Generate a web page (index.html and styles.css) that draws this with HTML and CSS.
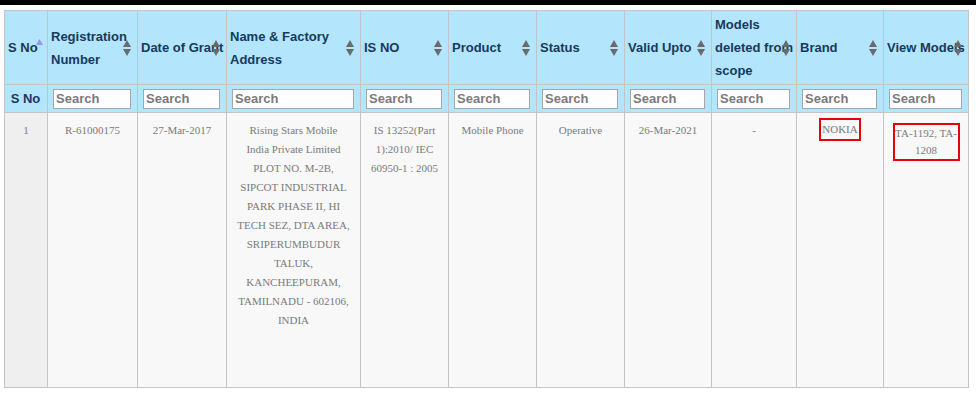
FILE: index.html
```html
<!DOCTYPE html>
<html>
<head>
    <title>Registered Products</title>
    <link rel="stylesheet" href="styles.css">
</head>
<body>
    <div class="top-bar"></div>

    <table class="reg-table">
        <colgroup>
            <col style="width: 43px">
            <col style="width: 90px">
            <col style="width: 89px">
            <col style="width: 134px">
            <col style="width: 88px">
            <col style="width: 88px">
            <col style="width: 88px">
            <col style="width: 87px">
            <col style="width: 85px">
            <col style="width: 87px">
            <col style="width: 85px">
        </colgroup>
        <thead>
            <tr class="head-row">
                <th class="sorted">S No<svg class="sort-asc" width="7" height="6" viewBox="0 0 7 6"><polygon points="3.5,0 7,6 0,6"/></svg></th>
                <th>Registration Number<svg class="sort-icon" width="8" height="16" viewBox="0 0 8 16"><polygon points="4,0 8,7 0,7"/><polygon points="0,9 8,9 4,16"/></svg></th>
                <th>Date of Grant<svg class="sort-icon" width="8" height="16" viewBox="0 0 8 16"><polygon points="4,0 8,7 0,7"/><polygon points="0,9 8,9 4,16"/></svg></th>
                <th>Name &amp; Factory Address<svg class="sort-icon" width="8" height="16" viewBox="0 0 8 16"><polygon points="4,0 8,7 0,7"/><polygon points="0,9 8,9 4,16"/></svg></th>
                <th>IS NO<svg class="sort-icon" width="8" height="16" viewBox="0 0 8 16"><polygon points="4,0 8,7 0,7"/><polygon points="0,9 8,9 4,16"/></svg></th>
                <th>Product<svg class="sort-icon" width="8" height="16" viewBox="0 0 8 16"><polygon points="4,0 8,7 0,7"/><polygon points="0,9 8,9 4,16"/></svg></th>
                <th>Status<svg class="sort-icon" width="8" height="16" viewBox="0 0 8 16"><polygon points="4,0 8,7 0,7"/><polygon points="0,9 8,9 4,16"/></svg></th>
                <th>Valid Upto<svg class="sort-icon" width="8" height="16" viewBox="0 0 8 16"><polygon points="4,0 8,7 0,7"/><polygon points="0,9 8,9 4,16"/></svg></th>
                <th>Models deleted from scope<svg class="sort-icon" width="8" height="16" viewBox="0 0 8 16"><polygon points="4,0 8,7 0,7"/><polygon points="0,9 8,9 4,16"/></svg></th>
                <th>Brand<svg class="sort-icon" width="8" height="16" viewBox="0 0 8 16"><polygon points="4,0 8,7 0,7"/><polygon points="0,9 8,9 4,16"/></svg></th>
                <th>View Models<svg class="sort-icon" width="8" height="16" viewBox="0 0 8 16"><polygon points="4,0 8,7 0,7"/><polygon points="0,9 8,9 4,16"/></svg></th>
            </tr>
            <tr class="filter-row">
                <th>S No</th>
                <th><input type="text" placeholder="Search"></th>
                <th><input type="text" placeholder="Search"></th>
                <th><input type="text" placeholder="Search"></th>
                <th><input type="text" placeholder="Search"></th>
                <th><input type="text" placeholder="Search"></th>
                <th><input type="text" placeholder="Search"></th>
                <th><input type="text" placeholder="Search"></th>
                <th><input type="text" placeholder="Search"></th>
                <th><input type="text" placeholder="Search"></th>
                <th><input type="text" placeholder="Search"></th>
            </tr>
        </thead>
        <tbody>
            <tr>
                <td class="sno">1</td>
                <td>R-61000175</td>
                <td>27-Mar-2017</td>
                <td>Rising Stars Mobile<br>India Private Limited<br>PLOT NO. M-2B,<br>SIPCOT INDUSTRIAL<br>PARK PHASE II, HI<br>TECH SEZ, DTA AREA,<br>SRIPERUMBUDUR<br>TALUK,<br>KANCHEEPURAM,<br>TAMILNADU - 602106,<br>INDIA</td>
                <td>IS 13252(Part 1):2010/ IEC 60950-1 : 2005</td>
                <td>Mobile Phone</td>
                <td>Operative</td>
                <td>26-Mar-2021</td>
                <td>-</td>
                <td class="brand"><span class="marked">NOKIA</span></td>
                <td><div class="marked marked-block">TA-1192, TA-<wbr>1208</div></td>
            </tr>
        </tbody>
    </table>
</body>
</html>
```

FILE: styles.css
```css
body {
    margin: 0;
    padding: 0;
    background-color: #fff;
    font-family: "Liberation Sans", Arial, sans-serif;
}

.top-bar {
    height: 5px;
    background-color: #000;
}

.reg-table {
    width: 964px;
    margin: 5px 0 0 4px;
    border-collapse: collapse;
    table-layout: fixed;
    border: 1px solid #bdbdbd;
}

.reg-table th,
.reg-table td {
    border: 1px solid #c4c4c4;
}

.reg-table th {
    background-color: #b3e5fc;
    color: #163a5e;
    font-size: 13px;
    font-weight: bold;
    text-align: left;
}

.head-row th {
    position: relative;
    height: 69px;
    padding: 2px 2px 2px 3px;
    line-height: 23px;
}

.sort-icon {
    position: absolute;
    right: 6px;
    top: 50%;
    margin-top: -8px;
    fill: #6a6a6a;
}

/* active sort column arrow */
.sort-asc {
    position: absolute;
    left: 31px;
    top: 28px;
    fill: #9496f2;
}

.filter-row th {
    height: 21px;
    padding: 3px 6px 3px 5px;
    text-align: center;
}

.filter-row input {
    width: 100%;
    height: 20px;
    box-sizing: border-box;
    margin: 0;
    padding: 0 2px;
    border: 1px solid #a6a6a6;
    background-color: #fff;
    font-family: "Liberation Sans", Arial, sans-serif;
    font-size: 13px;
    font-weight: bold;
    color: #333;
}

.filter-row input::placeholder {
    color: #7a7a7a;
}

.reg-table td {
    height: 258px;
    padding: 8px 8px;
    vertical-align: top;
    text-align: center;
    background-color: #f8f8f8;
    color: #7a7a7a;
    font-family: "Liberation Serif", "Times New Roman", serif;
    font-size: 11px;
    line-height: 19px;
}

.reg-table td.sno {
    background-color: #efefef;
}

.reg-table td.brand {
    padding-top: 5px;
    padding-bottom: 11px;
}

.marked {
    display: inline-block;
    border: 2px solid #e8000b;
    padding: 0 1px;
}

.marked-block {
    display: block;
    width: 67px;
    box-sizing: border-box;
    margin: 2px auto 0;
    padding: 0;
    line-height: 17px;
}
```
